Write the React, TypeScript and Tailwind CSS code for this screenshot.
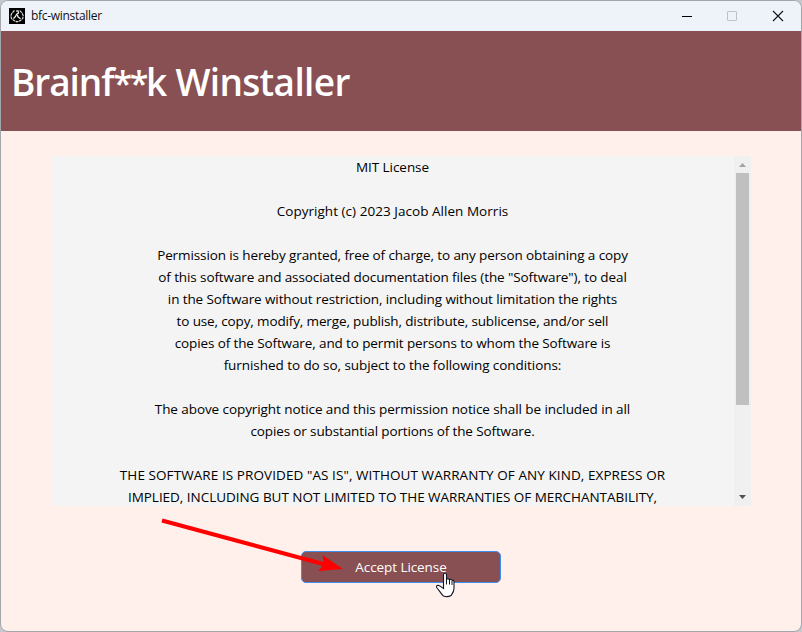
const license: { text: string; tracking: string }[] = [
  { text: 'MIT License', tracking: 'tracking-[-0.05px]' },
  { text: '', tracking: '' },
  { text: 'Copyright (c) 2023 Jacob Allen Morris', tracking: 'tracking-[0.04px]' },
  { text: '', tracking: '' },
  { text: 'Permission is hereby granted, free of charge, to any person obtaining a copy', tracking: 'tracking-[-0.105px]' },
  { text: 'of this software and associated documentation files (the "Software"), to deal', tracking: 'tracking-[-0.105px]' },
  { text: 'in the Software without restriction, including without limitation the rights', tracking: 'tracking-[-0.105px]' },
  { text: 'to use, copy, modify, merge, publish, distribute, sublicense, and/or sell', tracking: 'tracking-[-0.135px]' },
  { text: 'copies of the Software, and to permit persons to whom the Software is', tracking: 'tracking-[-0.115px]' },
  { text: 'furnished to do so, subject to the following conditions:', tracking: 'tracking-[-0.06px]' },
  { text: '', tracking: '' },
  { text: 'The above copyright notice and this permission notice shall be included in all', tracking: 'tracking-[-0.08px]' },
  { text: 'copies or substantial portions of the Software.', tracking: 'tracking-[-0.12px]' },
  { text: '', tracking: '' },
  { text: 'THE SOFTWARE IS PROVIDED "AS IS", WITHOUT WARRANTY OF ANY KIND, EXPRESS OR', tracking: 'tracking-[0.08px]' },
  { text: 'IMPLIED, INCLUDING BUT NOT LIMITED TO THE WARRANTIES OF MERCHANTABILITY,', tracking: 'tracking-[-0.03px]' },
];

function AppIcon() {
  return (
    <svg width="16" height="16" viewBox="0 0 16 16" fill="none" className="shrink-0">
      <rect width="16" height="16" fill="#000" />
      <path
        d="M5.500 2.500 3 5 1.700 8 2.500 10.500 5 12.500 8 13.800 11 12.800 13.800 10.500 14.200 7.500 12.800 4.500 10.500 2.500"
        stroke="#e4e4e4"
        strokeWidth="1.100"
        strokeDasharray="3 .6"
      />
      <path
        d="M7 3 9 2.800 9.500 5 7.500 6.500 6.500 8.500 4.500 10.500M8.500 7 9 9 11.500 10.800"
        stroke="#fff"
        strokeWidth="1.200"
      />
    </svg>
  );
}

function TitleBar() {
  return (
    <div className="flex h-[30px] items-center bg-[#eef3fa] pl-2">
      <AppIcon />
      <span className="ml-[6px] text-[12px] leading-4 tracking-[-0.3px] text-[#111]">bfc-winstaller</span>
      <div className="ml-auto flex items-center pr-4">
        <svg width="104" height="12" viewBox="0 0 104 12" fill="none">
          <path d="M1 6.500H11" stroke="#000" />
          <rect x="46.500" y="1.500" width="9" height="9" rx=".5" stroke="#bfc3c9" />
          <path d="M92 1 102 11M102 1 92 11" stroke="#111" strokeWidth="1.100" />
        </svg>
      </div>
    </div>
  );
}

function ScrollBar() {
  return (
    <div className="flex w-[17px] flex-col items-center bg-[#f0f0f0]">
      <svg width="17" height="17" viewBox="0 0 17 17">
        <path d="M5 11 8.500 7 12 11Z" fill="#a3a3a3" />
      </svg>
      <div className="h-[232px] w-[13px] bg-[#c0c0c0]" />
      <svg width="17" height="17" viewBox="0 0 17 17" className="mt-auto">
        <path d="M5 6H12L8.500 10Z" fill="#505050" />
      </svg>
    </div>
  );
}

export default function App() {
  return (
    <div className="relative h-[632px] w-[802px] overflow-hidden bg-[#c4c8cc] font-['Open_Sans','Noto_Sans',sans-serif]">
      <div className="flex h-[632px] w-[802px] flex-col overflow-hidden rounded-lg border border-[#a3a6ab] bg-[#fff0eb]">
        <TitleBar />
        <header className="flex h-[100px] items-center bg-[#885053] pt-[3px] pl-[10px]">
          <h1 className="text-[37px] leading-[50px] font-semibold tracking-[-0.65px] whitespace-nowrap text-white">
            <span className="tracking-[-1.1px]">Brainf</span>
            <span className="text-[34px] tracking-[-2.4px]">**</span>
            <span>k Winstaller</span>
          </h1>
        </header>
        <main className="flex flex-col items-center pt-[25px]">
          <section className="flex h-[350px] w-[700px] overflow-hidden bg-[#f4f4f4]">
            <div className="flex-1 text-center text-[13.5px] leading-[22px] text-black">
              {license.map((line, i) => (
                <p key={i} className={`h-[22px] whitespace-nowrap ${line.tracking}`}>
                  {line.text}
                </p>
              ))}
            </div>
            <ScrollBar />
          </section>
          <button className="mt-[45px] h-8 w-[200px] rounded-[5px] border border-[#3d8ef0] bg-[#885053] text-[13.5px] leading-[22px] tracking-[-0.08px] text-white">
            Accept License
          </button>
        </main>
      </div>
      <svg className="absolute top-0 left-0" width="802" height="632" viewBox="0 0 802 632">
        <path d="M162 520.500 325 564.500" stroke="#f00" strokeWidth="4" />
        <path d="M343 569 322.500 555 324 564.500 318 571Z" fill="#f00" />
        <path
          d="M443.500 585V574.500Q443.700 573.200 445 573.200 446.300 573.200 446.500 574.500V579.500Q448 578 449.500 579.800 451.200 578.700 452.300 580.500 454 579.800 454 582V588.500C454 592 452.500 593.500 451 595.500Q447.500 597.500 443.500 596C441 594 439 590 436.700 587.500Q436 585.500 438 585.200C440 585.500 441.500 587 443.500 588.500Z"
          fill="#fff"
          stroke="#111827"
          strokeWidth="1.100"
        />
        <path d="M446.500 579V584.500M449.500 580V584.500M452 581V585" stroke="#111827" strokeWidth="1" />
      </svg>
    </div>
  );
}
